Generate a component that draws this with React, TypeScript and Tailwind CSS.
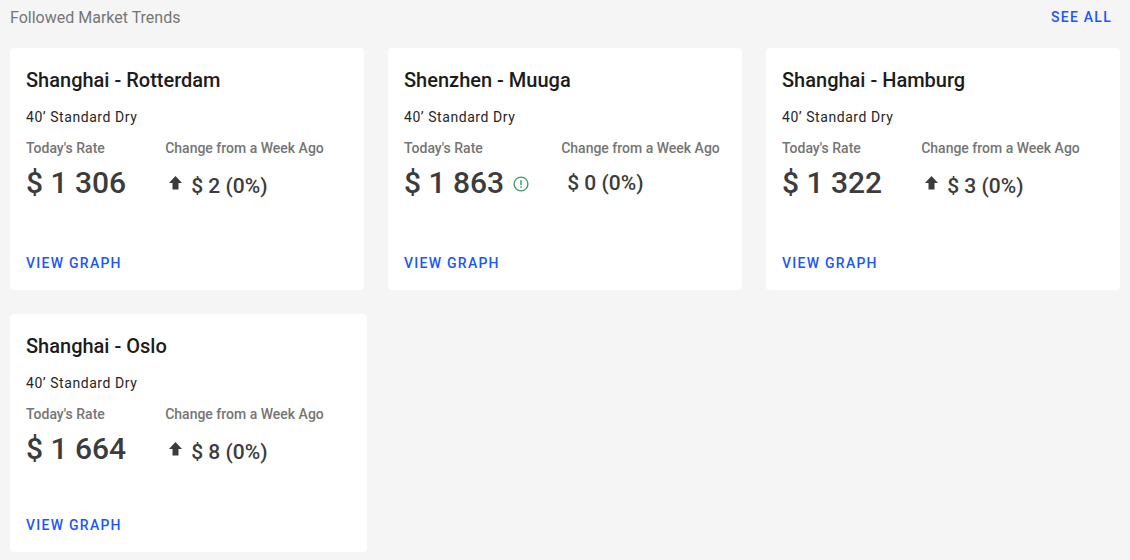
import { clsx } from "clsx";

type Trend = {
  route: string;
  equipment: string;
  rate: string;
  change: string;
  rising?: boolean;
  notice?: boolean;
};

const trends: Trend[] = [
  { route: "Shanghai - Rotterdam", equipment: "40’ Standard Dry", rate: "$ 1 306", change: "$ 2 (0%)", rising: true },
  { route: "Shenzhen - Muuga", equipment: "40’ Standard Dry", rate: "$ 1 863", change: "$ 0 (0%)", notice: true },
  { route: "Shanghai - Hamburg", equipment: "40’ Standard Dry", rate: "$ 1 322", change: "$ 3 (0%)", rising: true },
  { route: "Shanghai - Oslo", equipment: "40’ Standard Dry", rate: "$ 1 664", change: "$ 8 (0%)", rising: true },
];

const linkStyle = "text-sm leading-5 font-medium tracking-[0.09em] text-[#1a56ff] uppercase";

function ArrowUp() {
  return (
    <svg className="mb-1 h-4 w-5 shrink-0" viewBox="0 0 20 16" fill="#3c3c3c" aria-hidden="true">
      <path d="M10.5 1 L17 8 H13.5 V14.5 H7.5 V8 H4 Z" />
    </svg>
  );
}

function Notice() {
  return (
    <svg className="mt-0.5 ml-0.5 size-4 shrink-0" viewBox="0 0 16 16" fill="none" stroke="#3f9a6a" aria-hidden="true">
      <circle cx="8" cy="8" r="6.9" strokeWidth="1.4" />
      <path d="M8 4.2 V9" strokeWidth="1.5" />
      <path d="M8 10.3 V11.8" strokeWidth="1.5" />
    </svg>
  );
}

function TrendCard({ trend, className }: { trend: Trend; className?: string }) {
  return (
    <article className={clsx("flex flex-col items-start rounded bg-white px-4 pt-4 pb-[17px]", className)}>
      <h2 className="text-xl leading-8 font-medium text-[#1c1c1c]">{trend.route}</h2>
      <p className="mt-[11px] text-sm leading-5 font-normal tracking-[0.04em] text-[#262626]">{trend.equipment}</p>
      <dl className="mt-[11px] flex gap-8 whitespace-nowrap">
        <div>
          <dt className="text-sm leading-5 font-medium text-[#757575]">Today's Rate</dt>
          <dd className="mt-[5px] flex items-center text-3xl leading-10 font-medium text-[#3c3c3c]">
            <span className="pr-[7px]">{trend.rate}</span>
            {trend.notice && <Notice />}
          </dd>
        </div>
        <div>
          <dt className="text-sm leading-5 font-medium text-[#757575]">Change from a Week Ago</dt>
          <dd className="mt-[5px] flex items-center text-[21px] leading-10 font-medium text-[#3c3c3c]">
            {trend.rising && <ArrowUp />}
            <span className={clsx("pl-1.5", trend.rising && "pt-[3px]")}>{trend.change}</span>
          </dd>
        </div>
      </dl>
      <button type="button" className={clsx("mt-auto cursor-pointer", linkStyle)}>
        View graph
      </button>
    </article>
  );
}

export default function App() {
  return (
    <main className="min-h-screen bg-[#f5f5f5] px-2.5 pt-1 pb-2 font-['Roboto',sans-serif]">
      <header className="flex items-center justify-between pr-2">
        <h1 className="text-base leading-7 text-[#757575]">Followed Market Trends</h1>
        <a href="#all" className={clsx("pb-0.5", linkStyle)}>
          See all
        </a>
      </header>
      <section className="mt-4 grid grid-cols-3 gap-6">
        {trends.slice(0, 3).map((trend) => (
          <TrendCard key={trend.route} trend={trend} className="min-h-[242px]" />
        ))}
      </section>
      <section className="mt-6 flex">
        {trends.slice(3).map((trend) => (
          <TrendCard key={trend.route} trend={trend} className="min-h-[238px] w-[calc(33.3333%-13px)]" />
        ))}
      </section>
    </main>
  );
}
